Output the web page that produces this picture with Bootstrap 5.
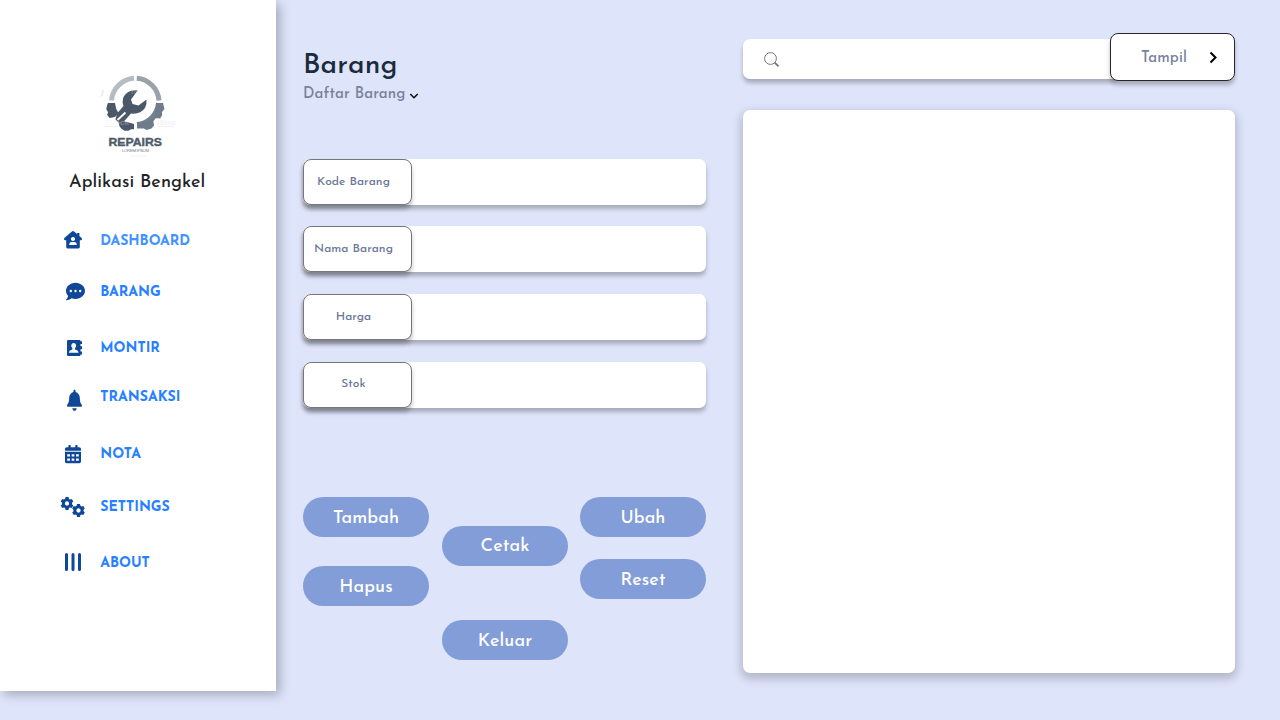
<!DOCTYPE html>
<html lang="id">
<head>
<meta charset="utf-8">
<meta name="viewport" content="width=device-width, initial-scale=1">
<title>Aplikasi Bengkel - Barang</title>
<link href="https://cdn.jsdelivr.net/npm/bootstrap@5.3.0/dist/css/bootstrap.min.css" rel="stylesheet">
<script src="https://cdn.jsdelivr.net/npm/bootstrap@5.3.0/dist/js/bootstrap.bundle.min.js" defer></script>
<style>
body{background:#dee4fa;font-family:"Josefin Sans",Lato,sans-serif;width:1280px;height:720px;overflow:hidden}
.sidebar{width:276px;height:691px;padding-top:70px;box-shadow:4px 4px 10px rgba(0,0,0,.25)}
.logo{width:84px;height:92px;margin-left:95px}
.app-name{margin:10px 0 0 69px;font-size:18px;line-height:22px;font-weight:500;letter-spacing:.08px;color:#232326}
.menu{margin:34px 0 0 59px}
.menu .nav-link{height:24px;margin-bottom:28px;padding:0;color:#2680ff;font-size:14px;line-height:24px;font-weight:700}
.menu .nav-link svg{width:28px;height:24px;margin-right:13.3px;fill:#0f4896;color:#0f4896;flex:none}
.menu .nav-link span{padding-top:2px}
.menu .nav-link.active{color:#4292ff}
.menu .nav-link:first-child span,.menu .nav-link:last-child span{padding-top:4px}
.menu .nav-link:nth-child(2){margin-bottom:32px}
.menu .nav-link:nth-child(4){margin-bottom:30px}
.menu .nav-link:nth-child(4) span{margin-top:-6px}
.menu .nav-link:nth-child(5){margin-bottom:29px}
.menu .nav-link:nth-child(6){margin-bottom:31px}
.form-col{width:403px;margin-left:27px;padding-top:48px}
.page-title{font-size:28px;line-height:36px;font-weight:500;letter-spacing:.15px;color:#1b2a3d}
.page-sub{font-size:15px;line-height:22px;font-weight:500;letter-spacing:.1px;color:#76819b}
.fields{margin-top:53px}
.field{height:46px;margin-bottom:22px;border-radius:7px;box-shadow:0 4px 4px rgba(0,0,0,.25)}
.field:first-child{margin-bottom:21px}
.field-label{width:109px;height:46px;border:1px solid #777;border-radius:8px;box-shadow:0 4px 4px rgba(0,0,0,.25);color:#6b7899;font-size:12px;font-weight:500;letter-spacing:.07px;padding-right:8px}
.field:last-child .field-label{padding-bottom:2px}
.actions{margin-top:67px;gap:12.5px}
.actions-side{gap:29px}
.actions-mid{gap:54px;padding-top:29px}
.actions-end{gap:22px}
.btn-act{width:126px;height:40px;border-radius:20px;background:#829dd8;color:#fff;font-size:18px;font-weight:500;letter-spacing:.08px;padding:5px 0 0;border:0}
.actions-mid .btn-act{padding-left:1px}
.btn-act.low{padding-top:2px}
.list-col{width:492px;margin-left:37px;padding-top:33px}
.toolbar{height:48px}
.search{height:40px;margin-top:4px;padding-left:21px;border-radius:7px;box-shadow:0 4px 4px rgba(0,0,0,.25)}
.search-btn{width:125px;height:48px;margin-left:-8px;border:1px solid #27272b;border-radius:8px;background:#fff;box-shadow:0 4px 4px rgba(0,0,0,.25);color:#76819f;font-size:15px;font-weight:500;letter-spacing:.1px;padding:0 16px 0 30px}
.search-btn span{padding-top:4px}
.result{height:563px;margin-top:29px;border-radius:7px;box-shadow:0 4px 10px 2px rgba(0,0,0,.2)}
</style>
</head>
<body class="d-flex align-items-start">
<svg class="d-none"><symbol id="gear" viewBox="-6.5 -6.5 13 13"><circle r="3.6" fill="none" stroke="currentColor" stroke-width="2.9"/><path id="tooth" d="M-1.5-6.4h3l.5 2.4h-4z"/><use href="#tooth" transform="rotate(60)"/><use href="#tooth" transform="rotate(120)"/><use href="#tooth" transform="rotate(180)"/><use href="#tooth" transform="rotate(240)"/><use href="#tooth" transform="rotate(300)"/></symbol></svg>
<aside class="sidebar bg-white flex-shrink-0">
<svg class="logo d-block" viewBox="95 70 84 92">
<g fill="none" stroke-width="5"><path d="M111.500 100.500a24 24 0 0 1 22.500-22.200" stroke="#b7bbc4"/><path d="M136.800 78.300a24 24 0 0 1 22.200 22.200" stroke="#9aa1ab"/><path d="M159 103a24 24 0 0 1-22 22" stroke="#74808d" stroke-width="6"/></g>
<path d="M108 103h7q.5 6 3.500 10l-3.500 4-5.500 1-2.500-3.500 1.200-2-2-3.500 1-4zM118.500 122.500l3.500-1.500 5 1 7 2v5.200h-3l-2.500 1.500h-4l-3-2-2-2.500z" fill="#4b5868"/>
<path d="M157 103h6l1.500 6-2.500 3 .2 3-2 3.500-6-.5zM137 124l9-2.500 7-3 1 7-2.500 3-5 1.500-2.500-1.500h-7z" fill="#6f7c89"/>
<path d="M137.700 90.500Q128 89 123.500 97q-1.700 5 0 9l-6.500 7.500-1.500 6 1 1 4 3.500 2.500-1.500 8-9q9.500 1 14-5.500 2-4 1.500-8.500l-8 6-6-1.500-1.500-4.500z" fill="#4b5868"/><path d="M117.500 120l8-7.500" stroke="#fff" stroke-width="1.800"/>
<g fill="#eeeff1" font-family="Liberation Sans" font-weight="700" font-size="8"><text x="105" y="125" opacity=".3">iStock</text><text x="157" y="125" opacity=".7">iStoc</text><text x="131" y="94" opacity=".25">iStock</text><path d="M98 96.500l3-1 1-5 2-1-1 7z"/></g>
<path d="M105 126.500h13M157 126.500h17M131 156h16" stroke="#f0f1f3"/>
<text x="108.500" y="146" font-family="Liberation Sans" font-weight="700" font-size="11.500" textLength="53.500" lengthAdjust="spacingAndGlyphs" fill="#4e5b6b" stroke="#4e5b6b" stroke-width=".4">REPAIRS</text>
<text x="122" y="152" font-family="Liberation Sans" font-size="4.300" textLength="27" lengthAdjust="spacing" fill="#777f8b">LOREM IPSUM</text></svg>
<div class="app-name">Aplikasi Bengkel</div>
<nav class="menu nav flex-column flex-nowrap">
<a class="nav-link active d-flex align-items-center" href="#"><svg viewBox="0 0 28 24"><path fill-rule="evenodd" d="M12.900 3.500q1.100-.9 2.200 0l3 2.500V5h2.300v3l2.300 2q1 1.700-.7 2.200h-1.200v6.700q0 1.600-1.600 1.600H8.800q-1.600 0-1.600-1.600v-6.700H6q-1.700-.5-.7-2.200zM14 8.900a2.100 2.100 0 1 0 .01 0M10.200 17h7.600q0-3-2.400-3h-2.800q-2.400 0-2.400 3"/></svg><span>DASHBOARD</span></a>
<a class="nav-link d-flex align-items-center" href="#"><svg viewBox="0 0 28 24"><path transform="translate(7 1.500) scale(.0371 .039)" d="M256 32C114.600 32 0 125.100 0 240c0 49.600 21.400 95 57 130.700C44.500 421.100 2.700 466 2.200 466.500c-2.200 2.300-2.800 5.700-1.500 8.700S4.800 480 8 480c66.300 0 116-31.800 140.600-51.400 32.700 12.300 69 19.400 107.400 19.400 141.400 0 256-93.100 256-208S397.400 32 256 32z"/><g fill="#fff"><circle cx="11.800" cy="11" r="1.200"/><circle cx="16.500" cy="11" r="1.200"/><circle cx="21.200" cy="11" r="1.200"/></g></svg><span>BARANG</span></a>
<a class="nav-link d-flex align-items-center" href="#"><svg viewBox="0 0 28 24"><rect x="8" y="4" width="13.500" height="16" rx="1"/><path d="M21 5.200h2v2.900h-2zM21 10.300h2v3h-2zM21 15.500h2v2.900h-2z"/><path fill="#fff" d="M14.700 7a2.500 2.700 0 0 1 1.300 5l.1 1.400q3.400.7 3.400 3.400h-9.600q0-2.700 3.400-3.400l.1-1.400a2.500 2.700 0 0 1 1.300-5"/></svg><span>MONTIR</span></a>
<a class="nav-link d-flex align-items-center" href="#"><svg viewBox="0 0 28 24"><path transform="translate(8 1.800) scale(.0335 .041)" d="M224 512c35.320 0 63.970-28.650 63.970-64H160.030c0 35.350 28.650 64 63.970 64zm215.390-149.710c-19.320-20.760-55.470-51.990-55.470-154.290 0-77.700-54.480-139.900-127.940-155.160V32c0-17.670-14.320-32-31.980-32s-31.980 14.330-31.980 32v20.840C118.560 68.100 64.080 130.300 64.080 208c0 102.300-36.150 133.530-55.470 154.290-6 6.450-8.660 14.160-8.610 21.710.11 16.400 12.980 32 32.100 32h383.800c19.120 0 32-15.600 32.100-32 .05-7.550-2.610-15.270-8.610-21.710z"/></svg><span>TRANSAKSI</span></a>
<a class="nav-link d-flex align-items-center" href="#"><svg viewBox="0 0 28 24"><g transform="translate(6 3) scale(.0357)"><path d="M436 160H12c-6.600 0-12-5.400-12-12v-36c0-26.500 21.500-48 48-48h48V12c0-6.600 5.400-12 12-12h40c6.600 0 12 5.400 12 12v52h128V12c0-6.600 5.400-12 12-12h40c6.600 0 12 5.400 12 12v52h48c26.500 0 48 21.500 48 48v36c0 6.600-5.400 12-12 12zM0 192h448v272c0 26.500-21.500 48-48 48H48c-26.500 0-48-21.500-48-48z"/><path fill="#fff" d="M62 256h76v64H62zM186 256h76v64h-76zM310 256h76v64h-76zM62 376h76v64H62zM186 376h76v64h-76zM310 376h76v64h-76z"/></g></svg><span>NOTA</span></a>
<a class="nav-link d-flex align-items-center" href="#"><svg viewBox="0 0 28 24"><use href="#gear" x="1.500" y="2" width="13" height="13"/><use href="#gear" x="13" y="9" width="13" height="13"/></svg><span>SETTINGS</span></a>
<a class="nav-link d-flex align-items-center" href="#"><svg viewBox="0 0 28 24"><path d="M7.500 4.500v15M14 4.500v15M20.500 4.500v15" stroke="currentColor" stroke-width="3" stroke-linecap="round"/></svg><span>ABOUT</span></a>
</nav>
</aside>
<main class="form-col flex-shrink-0">
<h1 class="page-title m-0">Barang</h1>
<div class="page-sub d-flex align-items-center"><span>Daftar Barang</span><svg class="ms-1 mt-1" width="10" height="8" viewBox="0 0 10 8"><path d="M1.300 1l3.700 3.700L8.700 1" fill="none" stroke="#111" stroke-width="1.600"/></svg></div>
<div class="fields d-flex flex-column">
<div class="field bg-white"><label class="field-label bg-white d-flex align-items-center justify-content-center">Kode Barang</label></div>
<div class="field bg-white"><label class="field-label bg-white d-flex align-items-center justify-content-center">Nama Barang</label></div>
<div class="field bg-white"><label class="field-label bg-white d-flex align-items-center justify-content-center">Harga</label></div>
<div class="field bg-white"><label class="field-label bg-white d-flex align-items-center justify-content-center">Stok</label></div>
</div>
<div class="actions d-flex align-items-start">
<div class="actions-side d-flex flex-column"><button class="btn btn-act">Tambah</button><button class="btn btn-act">Hapus</button></div>
<div class="actions-mid d-flex flex-column"><button class="btn btn-act low">Cetak</button><button class="btn btn-act">Keluar</button></div>
<div class="actions-end d-flex flex-column"><button class="btn btn-act">Ubah</button><button class="btn btn-act">Reset</button></div>
</div>
</main>
<section class="list-col flex-shrink-0">
<div class="toolbar d-flex align-items-center">
<div class="search bg-white flex-grow-1 d-flex align-items-center"><svg width="15" height="15" viewBox="0 0 15 15" fill="none" stroke="#777"><circle cx="6.500" cy="6.500" r="5.900"/><path d="M10.700 10.700L14.500 14.300" stroke-width="1.800"/></svg></div>
<button class="search-btn d-flex align-items-center justify-content-between position-relative"><span>Tampil</span><svg width="9" height="13" viewBox="0 0 9 13"><path d="M1.500 1.500l5 5-5 5" fill="none" stroke="#000" stroke-width="2"/></svg></button>
</div>
<div class="result bg-white"></div>
</section>
</body>
</html>
